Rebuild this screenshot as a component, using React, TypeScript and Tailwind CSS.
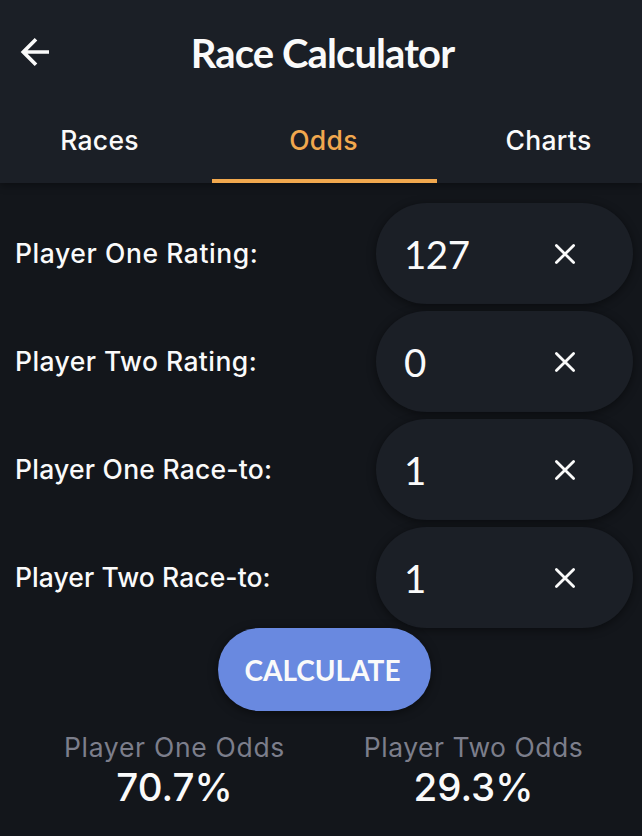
const fields = [
  { label: 'Player One Rating:', value: '127', labelStyle: 'tracking-[0.58px]', valueStyle: 'pl-[28px]' },
  { label: 'Player Two Rating:', value: '0', labelStyle: 'tracking-[0.43px]', valueStyle: 'pl-[28px]' },
  { label: 'Player One Race-to:', value: '1', labelStyle: 'tracking-[0.24px]', valueStyle: 'pl-[28px]' },
  { label: 'Player Two Race-to:', value: '1', labelStyle: 'tracking-[0.08px]', valueStyle: 'pl-[28px]' },
];

const odds = [
  { label: 'Player One Odds', value: '70.7%', labelStyle: 'tracking-[0.7px]' },
  { label: 'Player Two Odds', value: '29.3%', labelStyle: 'tracking-[0.5px]' },
];

function BackArrow() {
  return (
    <svg width="30" height="30" viewBox="0 0 30 30" fill="none" stroke="#fafafa" strokeWidth="3.7">
      <path d="M29 15H4M16 2.3L3.3 15L16 27.7" />
    </svg>
  );
}

function ClearIcon() {
  return (
    <svg width="22" height="22" viewBox="0 0 22 22" fill="none" stroke="#fafafa" strokeWidth="2.8" strokeLinecap="round">
      <path d="M2.4 2.4L19.6 19.6M19.6 2.4L2.4 19.6" />
    </svg>
  );
}

export default function App() {
  return (
    <main className="flex h-[836px] w-[642px] flex-col overflow-hidden bg-[#13161b] font-['Inter',sans-serif] text-[#fafafa]">
      <header className="h-[183px] shrink-0 bg-[#1b1f26] shadow-[0_2px_8px_rgba(0,0,0,0.4)]">
        <div className="grid h-[98px] grid-cols-[80px_1fr_80px] items-center pt-[6px]">
          <button aria-label="Back" className="pl-5">
            <BackArrow />
          </button>
          <h1 className="pl-[3px] pt-[2px] text-center font-['Lato',sans-serif] text-[40px] font-bold leading-none tracking-[-0.9px] whitespace-nowrap">
            Race Calculator
          </h1>
        </div>
        <nav className="-ml-[13px] grid h-[85px] w-[675px] grid-cols-3 text-[26.5px] font-medium tracking-[0.3px]">
          <button className="border-b-4 border-transparent pt-[5px]">Races</button>
          <button className="border-b-4 border-[#f1a84e] pt-[5px] pr-[2px] text-[#f1a84e]">Odds</button>
          <button className="border-b-4 border-transparent pt-[5px] pr-[2px]">Charts</button>
        </nav>
      </header>

      <section className="flex flex-col gap-[7px] pt-5 pr-[9px] pl-[15px]">
        {fields.map((f) => (
          <div key={f.label} className="flex h-[101px] items-center justify-between">
            <span className={`text-[26.5px] font-[450] whitespace-nowrap ${f.labelStyle}`}>{f.label}</span>
            <div className="flex h-full w-[257px] items-center justify-between rounded-full bg-[#1b1f26] pr-[57px] shadow-[0_2px_10px_rgba(0,0,0,0.45)]">
              <span className={`pt-px font-['Lato',sans-serif] text-[38.5px] leading-none tracking-[-0.5px] ${f.valueStyle}`}>{f.value}</span>
              <ClearIcon />
            </div>
          </div>
        ))}
      </section>

      <button className="ml-[218px] h-[83px] w-[213px] shrink-0 rounded-full bg-[#6989e0] pr-[4px] font-['Lato',sans-serif] text-[28px] font-bold shadow-[0_2px_10px_rgba(0,0,0,0.5)]">
        CALCULATE
      </button>

      <section className="ml-[25px] grid w-[598px] grid-cols-2 pt-5 text-center">
        {odds.map((o) => (
          <div key={o.label} className="flex flex-col">
            <span className={`text-[26.5px] leading-[32px] text-[#7c7e8b] whitespace-nowrap ${o.labelStyle}`}>{o.label}</span>
            <span className="text-[38.5px] leading-[49px] font-[450]">{o.value}</span>
          </div>
        ))}
      </section>
    </main>
  );
}
